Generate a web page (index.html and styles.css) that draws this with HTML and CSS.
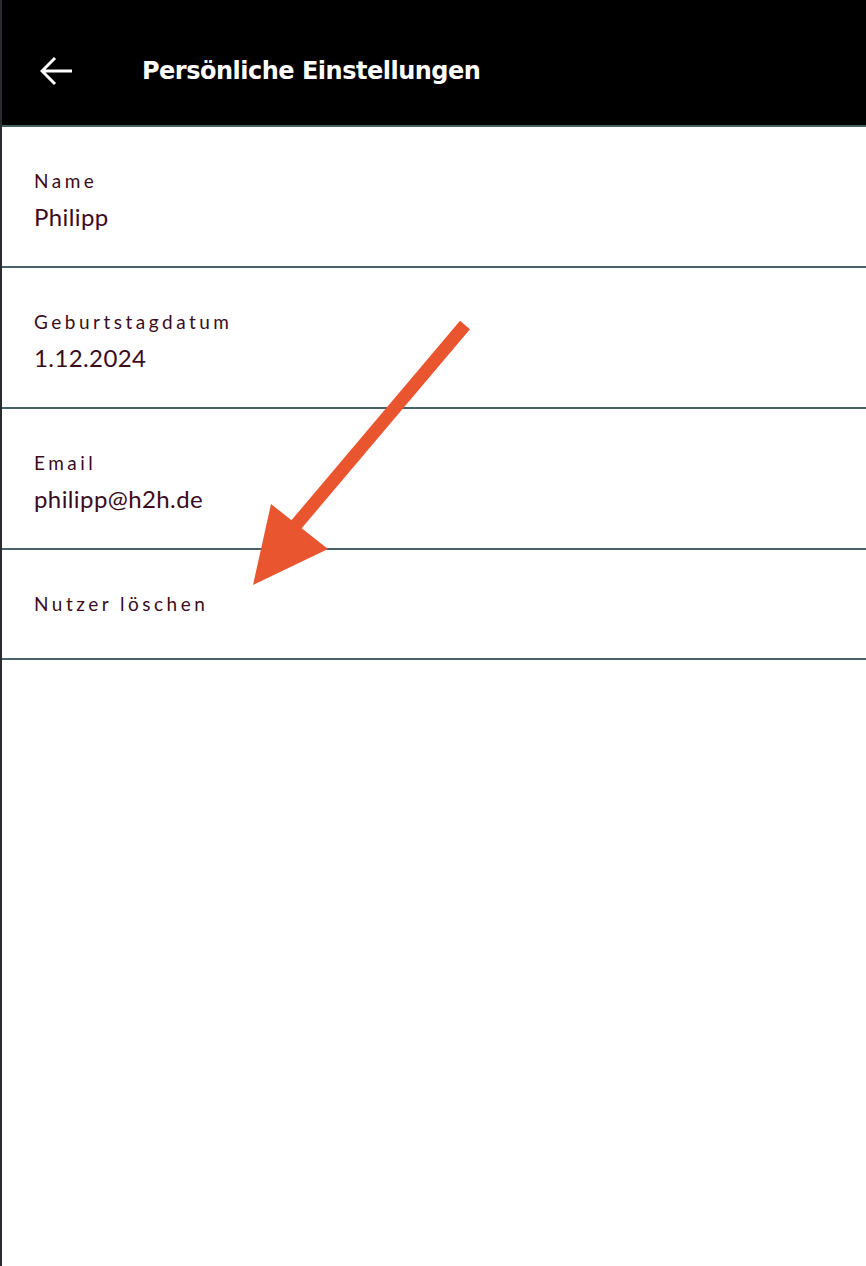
FILE: index.html
```html
<!DOCTYPE html>
<html lang="de">
<head>
  <meta charset="UTF-8" />
  <meta name="viewport" content="width=device-width, initial-scale=1.0"/>
  <title>Persönliche Einstellungen</title>
  <link rel="stylesheet" href="styles.css">
</head>
<body>

<div class="app">
  <div class="top-bar">
    <div class="back" onclick="history.back()">
      <svg width="34" height="30" viewBox="0 0 34 30">
        <path d="M2 15 H32 M15 2 L2 15 L15 28" fill="none" stroke="#fff" stroke-width="3"/>
      </svg>
    </div>
    <div class="title">Persönliche Einstellungen</div>
  </div>

  <div class="row">
    <div class="label">Name</div>
    <div class="value">Philipp</div>
  </div>
  <div class="row">
    <div class="label">Geburtstagdatum</div>
    <div class="value">1.12.2024</div>
  </div>
  <div class="row">
    <div class="label">Email</div>
    <div class="value">philipp@h2h.de</div>
  </div>
  <div class="row short">
    <div class="label">Nutzer löschen</div>
  </div>

  <svg class="pointer" width="866" height="660" viewBox="0 0 866 660">
    <line x1="465" y1="325" x2="290" y2="532" stroke="#e9552f" stroke-width="13"/>
    <polygon points="253,585 271,504 328,549" fill="#e9552f"/>
  </svg>
</div>

</body>
</html>
```

FILE: styles.css
```css
* { box-sizing: border-box; }
body {
  margin: 0;
  font-family: 'Lato', sans-serif;
  background: #fff;
  color: #3a0c1c;
}
.app {
  position: relative;
  min-height: 1266px;
  border-left: 2px solid #2b2b30;
}
.top-bar {
  display: flex;
  align-items: center;
  height: 127px;
  background: #000;
  border-bottom: 2px solid #486366;
  padding-left: 38px;
  padding-top: 16px;
}
.back { display: flex; cursor: pointer; }
.title {
  margin-left: 68px;
  color: #fff;
  font-family: 'DejaVu Sans', sans-serif;
  font-weight: 700;
  font-size: 24px;
  letter-spacing: -0.5px;
}
.row {
  height: 141px;
  padding: 42px 0 0 32px;
  border-bottom: 2px solid #486366;
}
.row.short { height: 110px; padding-top: 42px; }
.label {
  font-size: 19px;
  line-height: 24px;
  letter-spacing: 3.5px;
}
.value {
  margin-top: 10px;
  font-size: 24px;
  line-height: 28px;
  letter-spacing: 0.4px;
}
.pointer {
  position: absolute;
  left: -2px;
  top: 0;
  pointer-events: none;
}
```
